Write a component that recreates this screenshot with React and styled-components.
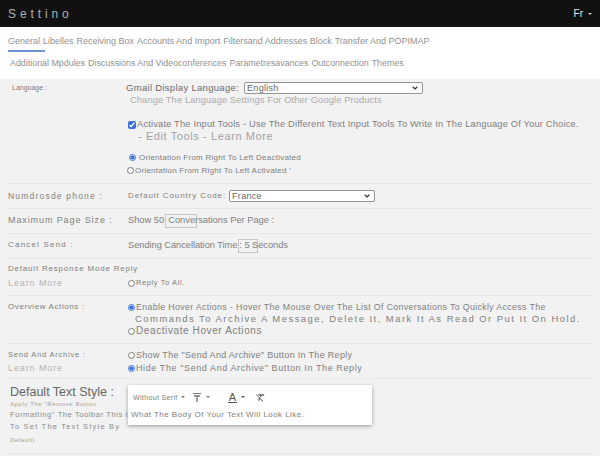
import React from 'react';
import styled, { createGlobalStyle, css } from 'styled-components';
import { ChevronDown } from 'lucide-react';
import { MdFormatClear } from 'react-icons/md';

// Base page reset and font
const GlobalStyle = createGlobalStyle`
  html, body {
    margin: 0;
    padding: 0;
    background: #f2f2f2;
  }
  body {
    font-family: "Liberation Sans", Arial, sans-serif;
    color: #808080;
  }
`;

const Page = styled.div`
  width: 600px;
  height: 456px;
  overflow: hidden;
  background: #f2f2f2;
`;

// Black header bar
const TopBar = styled.header`
  height: 27px;
  background: #111;
  display: flex;
  align-items: center;
  justify-content: space-between;
  padding: 0 8px 0 8px;
`;

const Title = styled.h1`
  margin: 0;
  font-size: 12px;
  font-weight: normal;
  color: #b0b0b0;
  letter-spacing: 3.9px;
`;

const LangMenu = styled.div`
  display: flex;
  align-items: center;
  gap: 5px;
  font-size: 10px;
  color: #e6e6e6;
`;

const Caret = styled.span`
  display: inline-block;
  width: 0;
  height: 0;
  border-left: ${p => p.$s || 2.5}px solid transparent;
  border-right: ${p => p.$s || 2.5}px solid transparent;
  border-top: ${p => (p.$s || 2.5) + 0.5}px solid ${p => p.$color || '#777'};
  vertical-align: middle;
  margin-left: ${p => p.$ml || 0}px;
`;

// Tabs strip
const Tabs = styled.nav`
  background: #fff;
  height: 52px;
  box-sizing: border-box;
  padding: 7px 8px 0;
`;

const TabLine = styled.div`
  display: flex;
  gap: ${p => p.$gap}px;
  font-size: ${p => p.$size}px;
  letter-spacing: ${p => p.$ls || 0}px;
  line-height: 14px;
  color: #929292;
  white-space: nowrap;
  padding-left: ${p => p.$indent || 0}px;
  margin-top: ${p => p.$mt || 0}px;
`;

const Tab = styled.span`
  position: relative;
  ${p => p.$active && css`
    &::after {
      content: '';
      position: absolute;
      left: 0;
      top: 16px;
      width: 37px;
      height: 2px;
      background: #6a93d8;
    }
  `}
`;

// Settings list
const Panel = styled.main`
  padding: 0 8px;
`;

const Row = styled.section`
  display: grid;
  grid-template-columns: 118px 1fr;
  height: ${p => p.$h}px;
  box-sizing: border-box;
  padding-top: ${p => p.$pt}px;
  border-bottom: 1px solid #e6e6e6;
`;

const Cell = styled.div`
  padding-top: ${p => p.$pt || 0}px;
  min-width: 0;
`;

const Line = styled.div`
  height: ${p => p.$h || 12}px;
  line-height: ${p => p.$h || 12}px;
  margin-top: ${p => p.$mt || 0}px;
  padding-left: ${p => p.$indent || 0}px;
  font-size: ${p => p.$size || 9}px;
  letter-spacing: ${p => p.$ls || 0}px;
  color: ${p => p.$color || '#808080'};
  white-space: nowrap;
`;

const SelectBox = styled.span`
  display: inline-flex;
  align-items: center;
  justify-content: space-between;
  vertical-align: middle;
  width: ${p => p.$w}px;
  height: 12px;
  box-sizing: border-box;
  margin-left: ${p => p.$ml || 0}px;
  padding: 0 3px 0 2px;
  background: #fff;
  border: 1px solid #959595;
  border-radius: 2px;
  font-size: 9px;
  letter-spacing: 0.3px;
  color: #666;
  line-height: 10px;
`;

const Field = styled.span`
  display: inline-block;
  vertical-align: middle;
  width: ${p => p.$w}px;
  height: 14px;
  box-sizing: border-box;
  border: 1px solid #c8c8c8;
  margin-left: ${p => p.$ml || 0}px;
  margin-right: ${p => -p.$w + (p.$keep || 2)}px;
`;

const Check = styled.input`
  width: 8px;
  height: 8px;
  margin: 0 1px 0 0;
  vertical-align: middle;
  accent-color: #3a6fd8;
`;

const Radio = styled.input`
  width: 7px;
  height: 7px;
  margin: 0 ${p => p.$gap || 1}px 0 ${p => p.$ml || 0}px;
  vertical-align: middle;
  accent-color: #3a6fd8;
`;

// Default text style card
const StyleCard = styled.div`
  position: relative;
  z-index: 1;
  width: 244px;
  height: 40px;
  margin: 1px 0 0 2px;
  padding: 5px 4px 0 3px;
  box-sizing: border-box;
  background: #fff;
  box-shadow: 0 1px 3px rgba(0, 0, 0, 0.28), 0 2px 6px rgba(0, 0, 0, 0.1);
`;

const Toolbar = styled.div`
  display: flex;
  align-items: center;
  height: 14px;
  padding-left: 2px;
  font-size: 7px;
  letter-spacing: 0.35px;
  color: #808080;
`;

const ToolGroup = styled.span`
  display: inline-flex;
  align-items: center;
  margin-left: ${p => p.$ml || 0}px;
  gap: ${p => p.$gap || 3}px;
`;

const ColorA = styled.span`
  font-size: 11px;
  line-height: 10px;
  color: #555;
  border-bottom: 1.5px solid #555;
  padding: 0 1px;
`;

const TextSizeIcon = () => (
  <svg width="10" height="11" viewBox="0 0 10 11">
    <path d="M1 1.5h8" stroke="#777" strokeWidth="1" />
    <path d="M2 4h6M5 4v6" stroke="#777" strokeWidth="1.3" />
  </svg>
);

const tabsTop = ['General', 'Libelles', 'Receiving Box', 'Accounts And Import', 'Filtersand Addresses Block', 'Transfer And POPIMAP'];
const tabsBottom = ['Additional Mpdules', 'Discussions And Videoconferences', 'Parametresavances', 'Outconnection', 'Themes'];

export default function App() {
  return (
    <Page>
      <GlobalStyle />
      <TopBar>
        <Title>Settino</Title>
        <LangMenu>
          Fr <Caret $s={2} $color="#ccc" />
        </LangMenu>
      </TopBar>

      <Tabs>
        <TabLine $size={9} $gap={3}>
          {tabsTop.map((t, i) => (
            <Tab key={t} $active={i === 0}>{t}</Tab>
          ))}
        </TabLine>
        <TabLine $size={8.9} $gap={3} $indent={2} $mt={8}>
          {tabsBottom.map(t => (
            <Tab key={t}>{t}</Tab>
          ))}
        </TabLine>
      </Tabs>

      <Panel>
        <Row $h={105} $pt={3}>
          <Cell>
            <Line $size={7} $indent={4}>Language :</Line>
          </Cell>
          <Cell>
            <Line $size={9.5} $ls={0.3} $color="#6e6e6e">
              Gmail Display Language:
              <SelectBox $w={179} $ml={5}>
                English
                <ChevronDown size={8} strokeWidth={3.5} color="#333" />
              </SelectBox>
            </Line>
            <Line $size={9.3} $ls={0.12} $indent={4} $color="#ababab">
              Change The Language Settings For Other Google Products
            </Line>
            <Line $mt={12} $size={9.3} $ls={0.18} $indent={2}>
              <Check type="checkbox" defaultChecked />
              Activate The Input Tools - Use The Different Text Input Tools To Write In The Language Of Your Choice.
            </Line>
            <Line $size={11} $ls={0.6} $indent={12} $color="#a2a2a2">
              - Edit Tools - Learn More
            </Line>
            <Line $mt={10} $size={8} $ls={0.25} $indent={3}>
              <Radio type="radio" name="dir" defaultChecked $gap={3} />
              Orientation From Right To Left Deactivated
            </Line>
            <Line $mt={1} $size={8} $ls={0.25} $indent={1}>
              <Radio type="radio" name="dir" $gap={0} />
              Orientation From Right To Left Activated '
            </Line>
          </Cell>
        </Row>

        <Row $h={25} $pt={6}>
          <Cell>
            <Line $size={8.5} $ls={1.2}>Numdrosde phone :</Line>
          </Cell>
          <Cell>
            <Line $size={8} $ls={0.9} $indent={2}>
              Default Country Code:
              <SelectBox $w={146} $ml={3}>
                France
                <ChevronDown size={8} strokeWidth={3.5} color="#333" />
              </SelectBox>
            </Line>
          </Cell>
        </Row>

        <Row $h={25} $pt={5}>
          <Cell>
            <Line $size={9} $ls={0.9}>Maximum Page Size :</Line>
          </Cell>
          <Cell>
            <Line $size={9.3} $ls={0} $indent={2}>
              Show 50<Field $w={32} $ml={1} $keep={3} />Conversations Per Page :
            </Line>
          </Cell>
        </Row>

        <Row $h={25} $pt={5}>
          <Cell>
            <Line $size={8} $ls={1.2}>Cancel Send :</Line>
          </Cell>
          <Cell>
            <Line $size={9.3} $ls={-0.05} $indent={2}>
              Sending Cancellation Time<Field $w={20} $ml={1} $keep={1} />: 5 Seconds
            </Line>
          </Cell>
        </Row>

        <Row $h={37} $pt={4}>
          <Cell>
            <Line $size={8} $ls={0.8}>Default Response Mode Reply</Line>
            <Line $mt={2} $size={9} $ls={0.9} $color="#b3b3b3">Learn More</Line>
          </Cell>
          <Cell $pt={14}>
            <Line $size={7.5} $ls={0.6} $indent={2}>
              <Radio type="radio" name="reply" $gap={1} />
              Reply To All.
            </Line>
          </Cell>
        </Row>

        <Row $h={48} $pt={5}>
          <Cell>
            <Line $size={8} $ls={0.6}>Overview Actions :</Line>
          </Cell>
          <Cell>
            <Line $size={8.8} $ls={0.35} $indent={2}>
              <Radio type="radio" name="hover" defaultChecked $gap={0} />
              Enable Hover Actions - Hover The Mouse Over The List Of Conversations To Quickly Access The
            </Line>
            <Line $size={9.5} $ls={1.45} $indent={9}>
              Commands To Archive A Message, Delete It, Mark It As Read Or Put It On Hold.
            </Line>
            <Line $size={10} $ls={0.6} $indent={2}>
              <Radio type="radio" name="hover" $gap={0} />
              Deactivate Hover Actions
            </Line>
          </Cell>
        </Row>

        <Row $h={35} $pt={5}>
          <Cell>
            <Line $size={7.5} $ls={0.8}>Send And Archive :</Line>
            <Line $mt={1} $size={9} $ls={0.9} $color="#b3b3b3">Learn More</Line>
          </Cell>
          <Cell>
            <Line $size={9} $ls={0.3} $indent={2}>
              <Radio type="radio" name="archive" $gap={0} />
              Show The "Send And Archive" Button In The Reply
            </Line>
            <Line $mt={1} $size={9} $ls={0.6} $indent={2}>
              <Radio type="radio" name="archive" defaultChecked $gap={0} />
              Hide The "Send And Archive" Button In The Reply
            </Line>
          </Cell>
        </Row>

        <Row $h={75} $pt={5}>
          <Cell>
            <Line $h={16} $size={12.5} $indent={2} $color="#666">Default Text Style :</Line>
            <Line $h={9} $size={6} $ls={0.6} $indent={2} $color="#a0a0a0">Apply The "Remove Button</Line>
            <Line $size={7.5} $ls={0.6} $indent={2} $color="#8c8c8c">Formatting" The Toolbar This is</Line>
            <Line $size={7.5} $ls={1.2} $indent={2} $color="#8c8c8c">To Set The Text Style By</Line>
            <Line $mt={1} $size={6} $ls={0.5} $indent={2} $color="#a0a0a0">Default)</Line>
          </Cell>
          <Cell>
            <StyleCard>
              <Toolbar>
                Without Serif
                <Caret $ml={3} $s={2} />
                <ToolGroup $ml={7} $gap={4}>
                  <TextSizeIcon />
                  <Caret $s={2} />
                </ToolGroup>
                <ToolGroup $ml={18} $gap={4}>
                  <ColorA>A</ColorA>
                  <Caret $s={2} $color="#555" />
                </ToolGroup>
                <ToolGroup $ml={10}>
                  <MdFormatClear size={11} color="#666" />
                </ToolGroup>
              </Toolbar>
              <Line $mt={5} $size={8} $ls={0.45}>
                What The Body Of Your Text Will Look Like.
              </Line>
            </StyleCard>
          </Cell>
        </Row>
      </Panel>
    </Page>
  );
}
